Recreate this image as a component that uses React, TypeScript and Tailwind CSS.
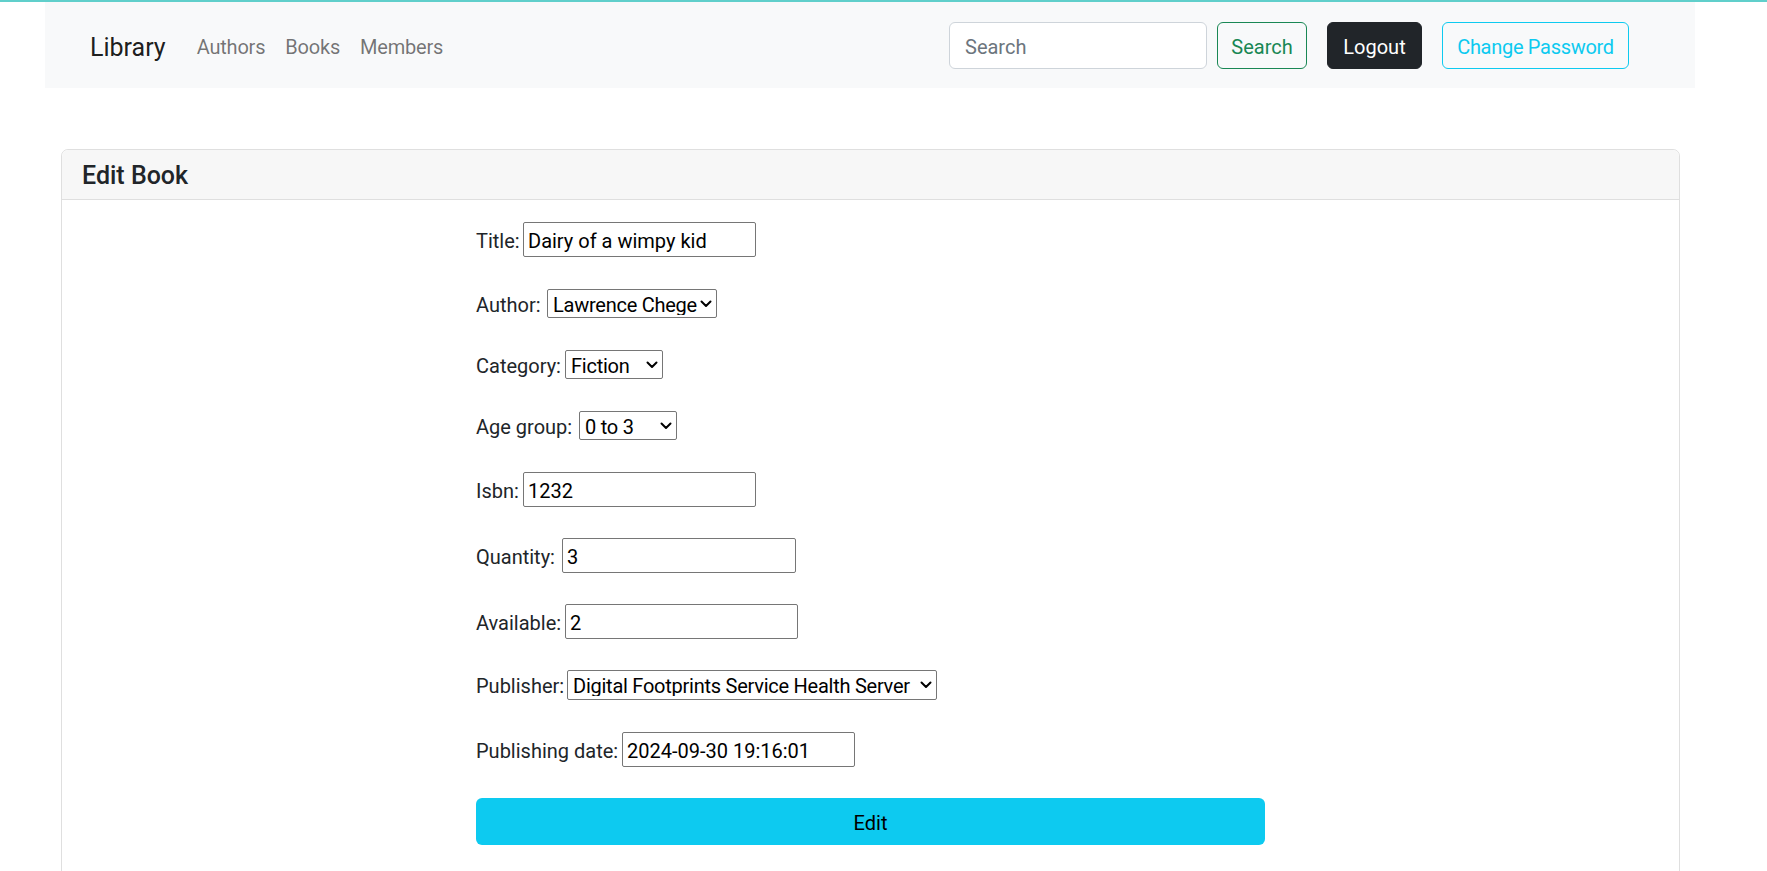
import React from "react";

function Chevron() {
  return (
    <svg
      width="12"
      height="8"
      viewBox="0 0 12 8"
      className="pointer-events-none absolute right-[5px] top-1/2 -translate-y-1/2"
    >
      <path
        d="M1.5 1.5l4.5 4.5 4.5-4.5"
        fill="none"
        stroke="#000"
        strokeWidth="2"
        strokeLinecap="round"
        strokeLinejoin="round"
      />
    </svg>
  );
}

function Row({
  label,
  lw,
  mb,
  children,
}: {
  label: string;
  lw: string;
  mb: string;
  children: React.ReactNode;
}) {
  return (
    <div className={`flex items-center ${mb}`}>
      <label className={`${lw} shrink-0 whitespace-nowrap pt-[2px] text-[20px] leading-none text-[#212529]`}>
        {label}
      </label>
      {children}
    </div>
  );
}

const inputCls =
  "h-[35px] rounded-[2px] border border-[#767676] bg-white px-[4px] pt-[2px] text-[20px] text-black outline-none";
const selectCls =
  "h-full w-full appearance-none rounded-[2px] border border-[#767676] bg-white pl-[5px] pr-[15px] pt-[2px] text-[20px] leading-none tracking-[-0.25px] text-black outline-none";

export default function App() {
  return (
    <div className="min-h-screen bg-white font-['Segoe_UI','Roboto','Liberation_Sans',sans-serif] text-[#212529]">
      <div className="h-[2px] w-full bg-[#60cfcb]" />
      <nav className="ml-[45px] flex h-[86px] w-[1650px] items-center bg-[#f8f9fa] pl-[45px] pr-[66px]">
        <a className="mr-[21px] pt-[4px] text-[25px] leading-none text-black/90">Library</a>
        <a className="px-[10px] pt-[4px] text-[20px] tracking-[-0.2px] text-black/55">Authors</a>
        <a className="px-[10px] pt-[4px] text-[20px] tracking-[-0.2px] text-black/55">Books</a>
        <a className="px-[10px] pt-[4px] text-[20px] tracking-[-0.2px] text-black/55">Members</a>
        <div className="ml-auto flex items-center">
          <input
            placeholder="Search"
            className="h-[47px] w-[258px] rounded-[6px] border border-[#ced4da] bg-white px-[15px] pt-[3px] text-[20px] text-[#212529] outline-none placeholder:text-[#6c757d]"
          />
          <button className="ml-[10px] flex h-[47px] w-[90px] items-center justify-center rounded-[6px] border border-[#198754] pt-[3px] text-[20px] text-[#198754]">
            Search
          </button>
          <button className="ml-[20px] flex h-[47px] w-[95px] items-center justify-center rounded-[6px] border border-[#212529] bg-[#212529] pt-[3px] text-[20px] text-white">
            Logout
          </button>
          <button className="ml-[20px] flex h-[47px] w-[187px] items-center justify-center rounded-[6px] border border-[#0dcaf0] pt-[3px] text-[20px] tracking-[-0.3px] text-[#0dcaf0]">
            Change Password
          </button>
        </div>
      </nav>

      <div className="ml-[61px] mt-[61px] w-[1619px] rounded-t-[7px] border border-[#dfdfdf]">
        <div className="flex h-[50px] items-center rounded-t-[7px] border-b border-[#dfdfdf] bg-[#f7f7f7] px-[20px] pt-[3px]">
          <h5 className="text-[25px] font-medium text-[#212529]">Edit Book</h5>
        </div>
        <div className="pb-[60px] pt-[22px]">
          <form className="mx-auto w-[789px]">
            <Row label="Title:" lw="w-[47px]" mb="mb-[32px]">
              <input defaultValue="Dairy of a wimpy kid" className={`${inputCls} w-[233px]`} />
            </Row>
            <Row label="Author:" lw="w-[71px]" mb="mb-[32px]">
              <div className="relative h-[29px] w-[170px]">
                <select defaultValue="1" className={selectCls}>
                  <option value="1">Lawrence Chege</option>
                </select>
                <Chevron />
              </div>
            </Row>
            <Row label="Category:" lw="w-[89px]" mb="mb-[32px]">
              <div className="relative h-[29px] w-[98px]">
                <select defaultValue="1" className={selectCls}>
                  <option value="1">Fiction</option>
                </select>
                <Chevron />
              </div>
            </Row>
            <Row label="Age group:" lw="w-[103px]" mb="mb-[32px]">
              <div className="relative h-[29px] w-[98px]">
                <select defaultValue="1" className={selectCls}>
                  <option value="1">0 to 3</option>
                </select>
                <Chevron />
              </div>
            </Row>
            <Row label="Isbn:" lw="w-[47px]" mb="mb-[31px]">
              <input defaultValue="1232" className={`${inputCls} w-[233px]`} />
            </Row>
            <Row label="Quantity:" lw="w-[86px]" mb="mb-[31px]">
              <input defaultValue="3" className={`${inputCls} w-[234px]`} />
            </Row>
            <Row label="Available:" lw="w-[89px]" mb="mb-[31px]">
              <input defaultValue="2" className={`${inputCls} w-[233px]`} />
            </Row>
            <Row label="Publisher:" lw="w-[91px]" mb="mb-[32px]">
              <div className="relative h-[30px] w-[370px]">
                <select defaultValue="1" className={selectCls}>
                  <option value="1">Digital Footprints Service Health Server</option>
                </select>
                <Chevron />
              </div>
            </Row>
            <Row label="Publishing date:" lw="w-[146px]" mb="mb-[31px]">
              <input defaultValue="2024-09-30 19:16:01" className={`${inputCls} w-[233px]`} />
            </Row>
            <button
              type="button"
              className="flex h-[47px] w-[789px] items-center justify-center rounded-[6px] bg-[#0dcaf0] pt-[2px] text-[20px] text-black"
            >
              Edit
            </button>
          </form>
        </div>
      </div>
    </div>
  );
}
